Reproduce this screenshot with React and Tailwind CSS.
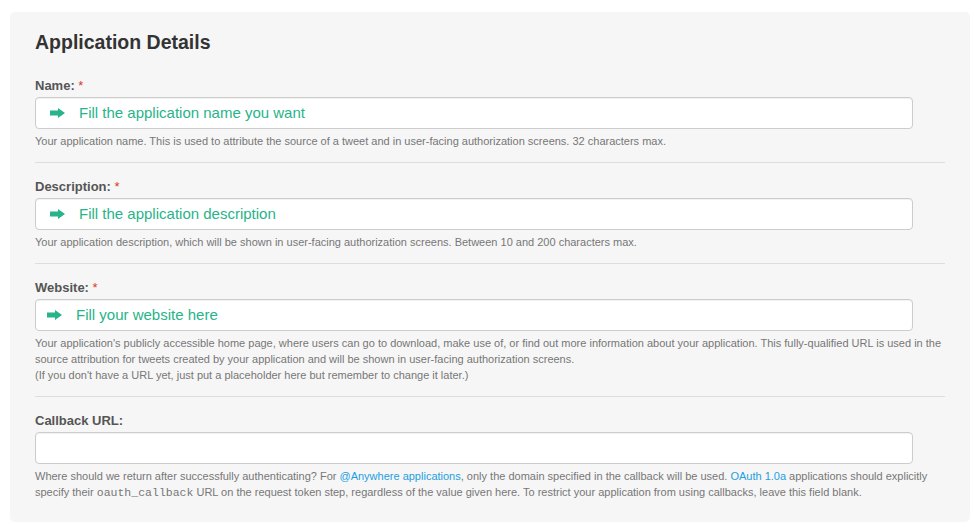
import React from "react";

const Arrow = () => (
  <svg width="15" height="10" viewBox="0 0 15 10" className="shrink-0">
    <path d="M0 2.5 H8 V0 L15 5 L8 10 V7.5 H0 Z" fill="#27b48b" />
  </svg>
);

function Field({ label, required, placeholder, pl = "pl-[14px]", gap = "gap-[14px]", children, last }) {
  return (
    <div>
      <div className="text-[13px] leading-[16px] font-bold text-[#555]">
        {label}
        {required && <span className="text-[#e0362b] font-normal"> *</span>}
      </div>
      <div
        className={`mt-[3px] h-[32px] w-[878px] bg-white border border-[#cccccc] rounded-[4px] shadow-[inset_0_1px_1px_rgba(0,0,0,0.06)] flex items-center ${pl} ${gap}`}
      >
        {placeholder && (
          <>
            <Arrow />
            <span className="text-[15px] text-[#27b48b]">{placeholder}</span>
          </>
        )}
      </div>
      <div className="mt-[4px] text-[11px] leading-[16px] text-[#777]">{children}</div>
      {!last && <div className="mt-[13px] mb-[16px] h-px bg-[#dddddd]" />}
    </div>
  );
}

export default function App() {
  return (
    <div className="w-[978px] h-[532px] bg-white pt-[12px] pl-[10px]" style={{ fontFamily: '"Liberation Sans", Arial, sans-serif' }}>
      <div className="w-[960px] h-[510px] bg-[#f6f6f6] rounded-[5px] pt-[18px] px-[25px]">
        <h1 className="text-[19.5px] leading-[24px] font-bold text-[#333]">Application Details</h1>
        <div className="mt-[24px]">
          <Field label="Name:" required placeholder="Fill the application name you want">
            Your application name. This is used to attribute the source of a tweet and in user-facing authorization screens. 32 characters max.
          </Field>
          <Field label="Description:" required placeholder="Fill the application description">
            Your application description, which will be shown in user-facing authorization screens. Between 10 and 200 characters max.
          </Field>
          <Field label="Website:" required placeholder="Fill your website here" pl="pl-[11px]" gap="gap-[14px]">
            Your application's publicly accessible home page, where users can go to download, make use of, or find out more information about your application. This fully-qualified URL is used in the source attribution for tweets created by your application and will be shown in user-facing authorization screens.
            <br />
            (If you don't have a URL yet, just put a placeholder here but remember to change it later.)
          </Field>
          <Field label="Callback URL:" last>
            Where should we return after successfully authenticating? For{" "}
            <span className="text-[#1d9fe0]">@Anywhere applications</span>, only the domain specified in the callback will be used.{" "}
            <span className="text-[#1d9fe0]">OAuth 1.0a</span> applications should explicitly specify their{" "}
            <code className="text-[11.5px] leading-none" style={{ fontFamily: '"Liberation Mono", "Courier New", monospace' }}>oauth_callback</code> URL on the request token step, regardless of the value given here. To restrict your application from using callbacks, leave this field blank.
          </Field>
        </div>
      </div>
    </div>
  );
}
